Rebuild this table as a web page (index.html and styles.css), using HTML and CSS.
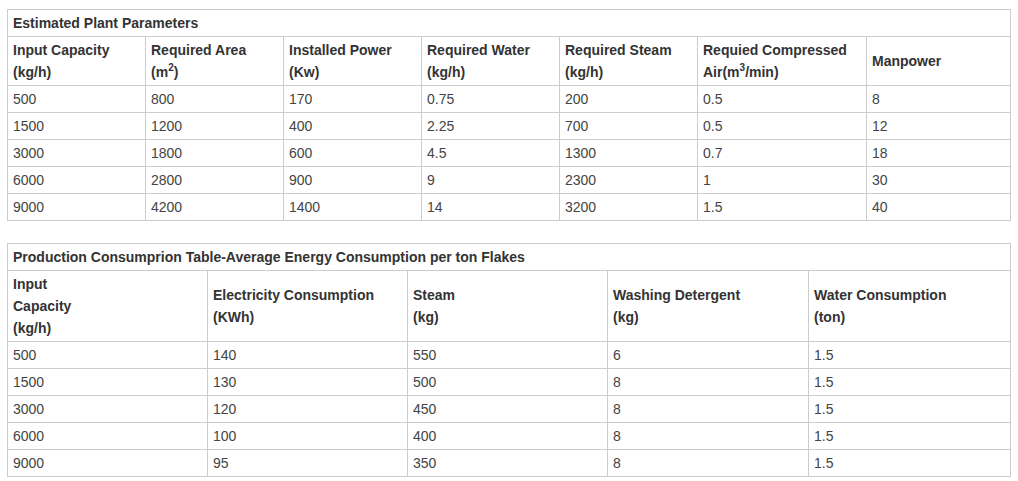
FILE: index.html
```html
<!DOCTYPE html>
<html>
<head>
<meta charset="utf-8">
<link rel="stylesheet" href="styles.css">
</head>
<body>
<div class="page">
<table class="grid t1">
  <colgroup>
    <col class="c138"><col class="c138"><col class="c138"><col class="c138"><col class="c138"><col class="c169"><col class="c144">
  </colgroup>
  <tr><th colspan="7" class="title">Estimated Plant Parameters</th></tr>
  <tr class="head">
    <th>Input Capacity<br>(kg/h)</th>
    <th>Required Area<br>(m<sup>2</sup>)</th>
    <th>Installed Power<br>(Kw)</th>
    <th>Required Water<br>(kg/h)</th>
    <th>Required Steam<br>(kg/h)</th>
    <th>Requied Compressed<br>Air(m<sup>3</sup>/min)</th>
    <th>Manpower</th>
  </tr>
  <tr><td>500</td><td>800</td><td>170</td><td>0.75</td><td>200</td><td>0.5</td><td>8</td></tr>
  <tr><td>1500</td><td>1200</td><td>400</td><td>2.25</td><td>700</td><td>0.5</td><td>12</td></tr>
  <tr><td>3000</td><td>1800</td><td>600</td><td>4.5</td><td>1300</td><td>0.7</td><td>18</td></tr>
  <tr><td>6000</td><td>2800</td><td>900</td><td>9</td><td>2300</td><td>1</td><td>30</td></tr>
  <tr><td>9000</td><td>4200</td><td>1400</td><td>14</td><td>3200</td><td>1.5</td><td>40</td></tr>
</table>

<table class="grid t2">
  <colgroup>
    <col class="c200"><col class="c200"><col class="c200"><col class="c201"><col class="c202">
  </colgroup>
  <tr><th colspan="5" class="title">Production Consumprion Table-Average Energy Consumption per ton Flakes</th></tr>
  <tr class="head">
    <th>Input<br>Capacity<br>(kg/h)</th>
    <th>Electricity Consumption<br>(KWh)</th>
    <th>Steam<br>(kg)</th>
    <th>Washing Detergent<br>(kg)</th>
    <th>Water Consumption<br>(ton)</th>
  </tr>
  <tr><td>500</td><td>140</td><td>550</td><td>6</td><td>1.5</td></tr>
  <tr><td>1500</td><td>130</td><td>500</td><td>8</td><td>1.5</td></tr>
  <tr><td>3000</td><td>120</td><td>450</td><td>8</td><td>1.5</td></tr>
  <tr><td>6000</td><td>100</td><td>400</td><td>8</td><td>1.5</td></tr>
  <tr><td>9000</td><td>95</td><td>350</td><td>8</td><td>1.5</td></tr>
</table>
</div>
</body>
</html>
```

FILE: styles.css
```css
html, body {
  margin: 0;
  padding: 0;
  background: #ffffff;
}
.page {
  padding: 9px 0 0 7px;
  font-family: "Liberation Sans", Arial, sans-serif;
  font-size: 14px;
  color: #333333;
}
.grid {
  border-collapse: collapse;
  table-layout: fixed;
  width: 1003px;
}
.t2 {
  margin-top: 22px;
}
.grid th,
.grid td {
  border: 1px solid #cccccc;
  padding: 2px 5px 2px 5px;
  line-height: 22px;
  text-align: left;
  vertical-align: middle;
}
.grid th {
  font-weight: bold;
  color: #333333;
}
.grid td {
  font-weight: normal;
  color: #444444;
}
.grid sup {
  font-size: 10px;
  line-height: 0;
  vertical-align: 6px;
}
.c138 { width: 138px; }
.c169 { width: 169px; }
.c144 { width: 144px; }
.c200 { width: 200px; }
.c201 { width: 201px; }
.c202 { width: 202px; }
```
